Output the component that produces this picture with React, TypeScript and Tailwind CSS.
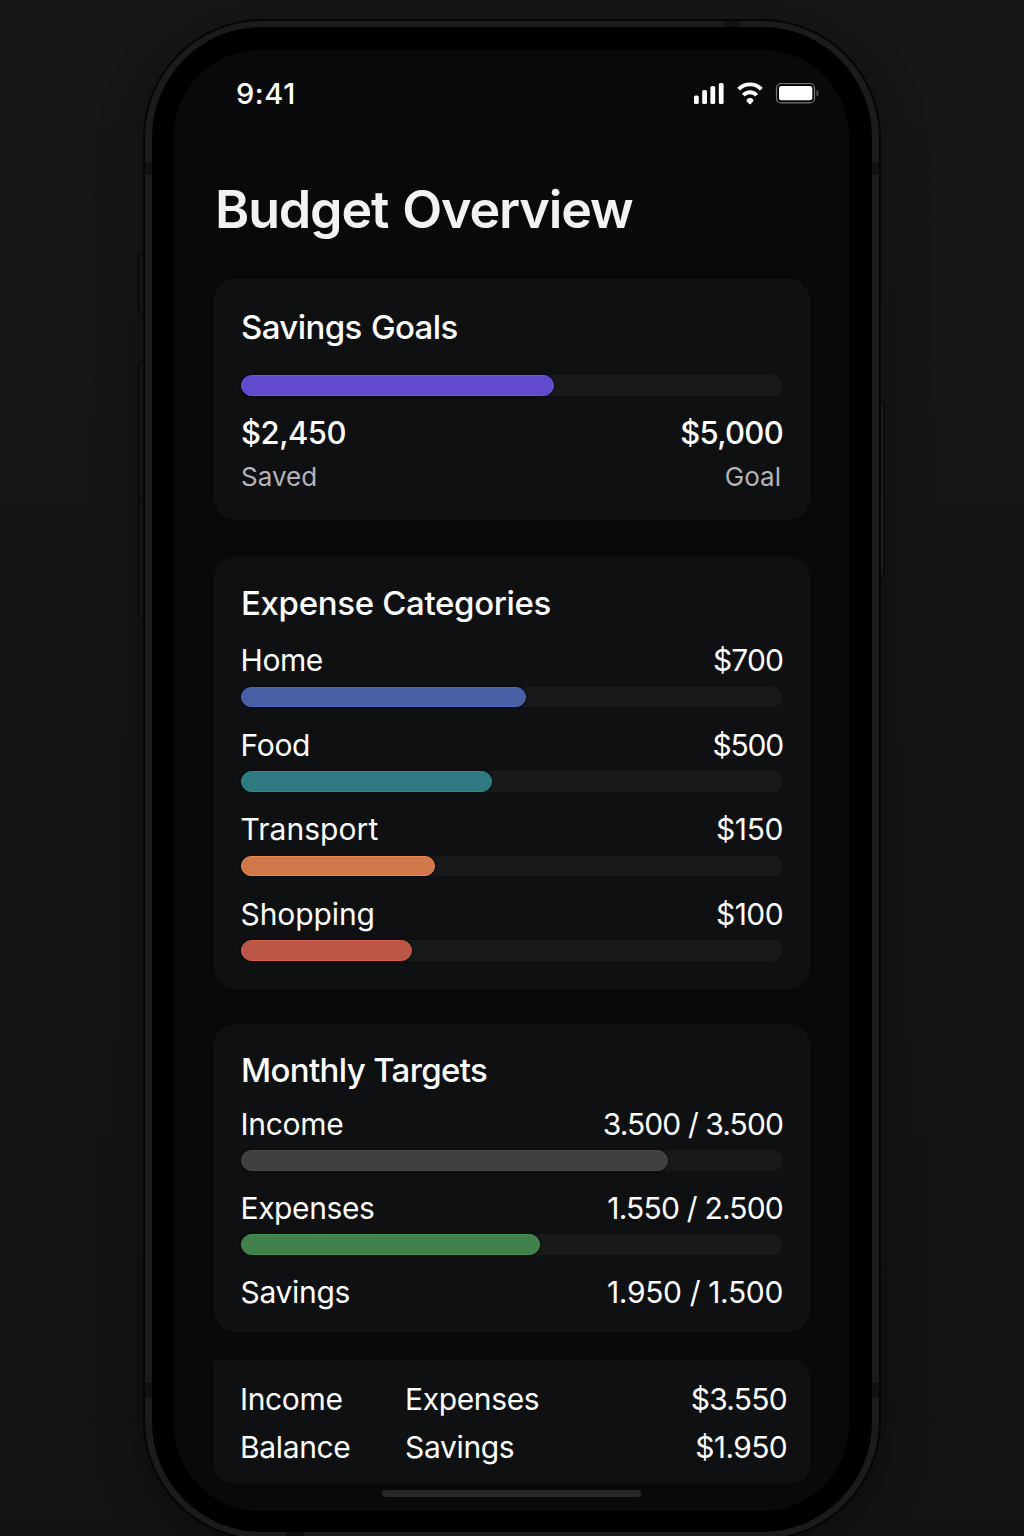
import type { ReactNode } from 'react';

type Row = {
  label: string;
  value: string;
  labelClass: string;
  valueClass: string;
  bar?: string;
};

const categories: Row[] = [
  { label: 'Home', value: '$700', labelClass: 'tracking-[-0.4px]', valueClass: 'tracking-[-0.9px]', bar: 'w-[285px] bg-[#4a60a6] border-[#4c67c0]' },
  { label: 'Food', value: '$500', labelClass: 'tracking-[-0.3px]', valueClass: 'tracking-[-1.2px]', bar: 'w-[250.5px] bg-[#2e7a80] border-[#2a8e95]' },
  { label: 'Transport', value: '$150', labelClass: 'tracking-[0.05px]', valueClass: 'tracking-[-0.4px]', bar: 'w-[194px] bg-[#d0784a] border-[#ec8a51]' },
  { label: 'Shopping', value: '$100', labelClass: 'tracking-[-0.1px]', valueClass: 'tracking-[-0.6px]', bar: 'w-[171px] bg-[#bb5747] border-[#d85f4d]' },
];

const targets: Row[] = [
  { label: 'Income', value: '3.500 / 3.500', labelClass: 'tracking-[-0.3px]', valueClass: 'tracking-[-0.9px]', bar: 'w-[427px] bg-[#404041] border-[#4a4a4b]' },
  { label: 'Expenses', value: '1.550 / 2.500', labelClass: 'tracking-[-0.4px]', valueClass: 'tracking-[-0.8px]', bar: 'w-[299px] bg-[#42814c] border-[#459451]' },
  { label: 'Savings', value: '1.950 / 1.500', labelClass: 'tracking-[-0.3px]', valueClass: 'tracking-[-0.35px]' },
];

function Track({ fill, className }: { fill: string; className: string }) {
  return (
    <div className={`w-[542px] rounded-full bg-[#18191b] ${className}`}>
      <div className={`h-full rounded-full border shadow-[0_0_2px_0.5px_#08090a] ${fill}`} />
    </div>
  );
}

function Card({ className, children }: { className: string; children: ReactNode }) {
  return (
    <section className={`w-[596px] border border-[#111314] bg-[#0e1011] pl-[26px] ${className}`}>{children}</section>
  );
}

function CardTitle({ className, children }: { className: string; children: ReactNode }) {
  return <h2 className={`h-10 whitespace-nowrap text-[33px] leading-10 font-medium ${className}`}>{children}</h2>;
}

function Rows({ rows, className }: { rows: Row[]; className: string }) {
  return (
    <div className={`flex w-[542px] flex-col ${className}`}>
      {rows.map((r) => (
        <div key={r.label}>
          <div className="-ml-[0.5px] flex h-9 justify-between text-[30px] leading-9 whitespace-nowrap">
            <span className={r.labelClass}>{r.label}</span>
            <span className={r.valueClass}>{r.value}</span>
          </div>
          {r.bar && <Track fill={r.bar} className="mt-[8.5px] h-[20.5px]" />}
        </div>
      ))}
    </div>
  );
}

function StatusIcons() {
  return (
    <svg className="mt-[30px] h-[26px] w-[128px]" viewBox="692 80 128 26" fill="none">
      <g fill="#fff">
        <rect x="694" y="95.5" width="4.8" height="8.5" rx="1.6" />
        <rect x="702.2" y="90" width="4.8" height="14" rx="1.6" />
        <rect x="710.4" y="86" width="4.8" height="18" rx="1.6" />
        <rect x="718.8" y="83" width="4.8" height="21" rx="1.6" />
        <path d="M747 99.2C748.5 97.5 751.5 97.5 753 99.2C753.6 100 753.4 101 752.8 101.7L750.7 103.9C750.3 104.3 749.7 104.3 749.3 103.9L747.2 101.7C746.6 101 746.4 100 747 99.2z" />
        <rect x="779" y="86" width="33.3" height="14.2" rx="2.5" />
      </g>
      <path d="M738.6 89.2C745 82.7 755 82.7 761.4 89.2" stroke="#fff" strokeWidth="3.9" />
      <path d="M743.4 95.2C747 91.3 753 91.3 756.6 95.2" stroke="#fff" strokeWidth="3.9" />
      <rect x="776.5" y="83.5" width="38" height="19.4" rx="4.5" stroke="#77787a" strokeWidth="1.2" />
      <path d="M816.8 90.3c1.9 1 1.9 5 0 6z" fill="#4b4c4e" stroke="#4b4c4e" strokeWidth="0.8" />
    </svg>
  );
}

export default function App() {
  return (
    <div className="relative h-[1536px] w-[1024px] overflow-hidden bg-[#161616] bg-linear-to-b from-[#171717] to-[#131313] pt-[19px] pl-[143px] font-['Inter',sans-serif] text-white antialiased">
      <div className="absolute top-[253px] left-[138px] h-[60px] w-[8px] rounded-l-sm border-2 border-[#0e0e0e] bg-[#1a1a1a]" />
      <div className="absolute top-[361px] left-[138px] h-[142px] w-[8px] rounded-l-sm border-2 border-[#0e0e0e] bg-[#1a1a1a]" />
      <div className="absolute top-[501px] left-[138px] h-[118px] w-[8px] rounded-l-sm border-2 border-[#0e0e0e] bg-[#1a1a1a]" />
      <div className="absolute top-[401px] left-[878px] h-[176px] w-[7px] rounded-r-sm border-2 border-[#0c0c0c] bg-[#222222]" />

      <div className="relative h-[1521px] w-[738px] rounded-[119px] bg-[#060606] p-[2px] shadow-[0_10px_40px_6px_rgba(0,0,0,0.3)]">
        <div className="h-full w-full rounded-[117px] bg-[#1b1b1b] p-[6px] px-[7px]">
          <div className="h-full w-full rounded-[110px] bg-black pt-[23px] pl-[22px]">
            <main className="flex h-[1461px] w-[675px] flex-col rounded-[86px] bg-[#07090b] pl-10">
              <header className="flex h-[129px] justify-between">
                <span className="ml-[22px] mt-[25.5px] h-9 text-[29px] leading-9 font-medium tracking-[0.6px]">9:41</span>
                <div className="mr-[29px]">
                  <StatusIcons />
                </div>
              </header>
              <h1 className="ml-[1px] h-[62px] text-[52px] leading-[62px] font-semibold tracking-[-1.15px] [word-spacing:2px] whitespace-nowrap text-[#f2f2f2]">
                Budget Overview
              </h1>

              <Card className="mt-[38px] h-[241px] rounded-[22px] pt-[27px]">
                <CardTitle className="tracking-[-0.6px] [word-spacing:1px]">Savings Goals</CardTitle>
                <Track fill="w-[313px] bg-[#614acb] border-[#6e57e6]" className="mt-7 h-[21px]" />
                <div className="mt-[17px] flex h-10 w-[542px] justify-between text-[31px] leading-10 font-medium">
                  <span className="tracking-[-0.5px]">$2,450</span>
                  <span className="tracking-[-0.7px]">$5,000</span>
                </div>
                <div className="mt-[8px] flex h-8 w-[540px] justify-between text-[26px] leading-8 text-[#b4b4b7]">
                  <span>Saved</span>
                  <span>Goal</span>
                </div>
              </Card>

              <Card className="mt-[37px] h-[432px] rounded-[22px] pt-[25px]">
                <CardTitle className="tracking-[-0.34px]">Expense Categories</CardTitle>
                <Rows rows={categories} className="mt-[19px] gap-[19.5px]" />
              </Card>

              <Card className="mt-[35px] h-[308px] rounded-[22px] pt-[25px]">
                <CardTitle className="tracking-[-0.65px]">Monthly Targets</CardTitle>
                <Rows rows={targets} className="mt-[15.5px] gap-[19px]" />
              </Card>

              <Card className="mt-7 h-[123px] rounded-[18px] rounded-tl-[3px] pt-[13.5px]">
                <div className="-ml-px grid w-[547px] grid-cols-[165px_1fr_auto] text-[30px] leading-[48px] tracking-[-0.35px]">
                  <span>Income</span>
                  <span>Expenses</span>
                  <span className="text-right tracking-[-0.75px]">$3.550</span>
                  <span>Balance</span>
                  <span>Savings</span>
                  <span className="text-right tracking-[-0.65px]">$1.950</span>
                </div>
              </Card>
              <div className="mt-[7px] ml-[168px] h-[7px] w-[259px] rounded-full bg-[#272728]" />
            </main>
          </div>
        </div>
        <div className="absolute top-[2px] left-[581px] h-[6px] w-[16px] bg-[#111111]" />
        <div className="absolute top-[143px] left-[2px] h-[13px] w-[7px] bg-[#111111]" />
        <div className="absolute top-[143px] left-[729px] h-[13px] w-[7px] bg-[#111111]" />
        <div className="absolute top-[1364px] left-[2px] h-[14px] w-[7px] bg-[#111111]" />
        <div className="absolute top-[1364px] left-[729px] h-[14px] w-[7px] bg-[#111111]" />
        <div className="absolute top-[1513px] left-[143px] h-[6px] w-[18px] bg-[#0c0c0c]" />
      </div>
    </div>
  );
}
